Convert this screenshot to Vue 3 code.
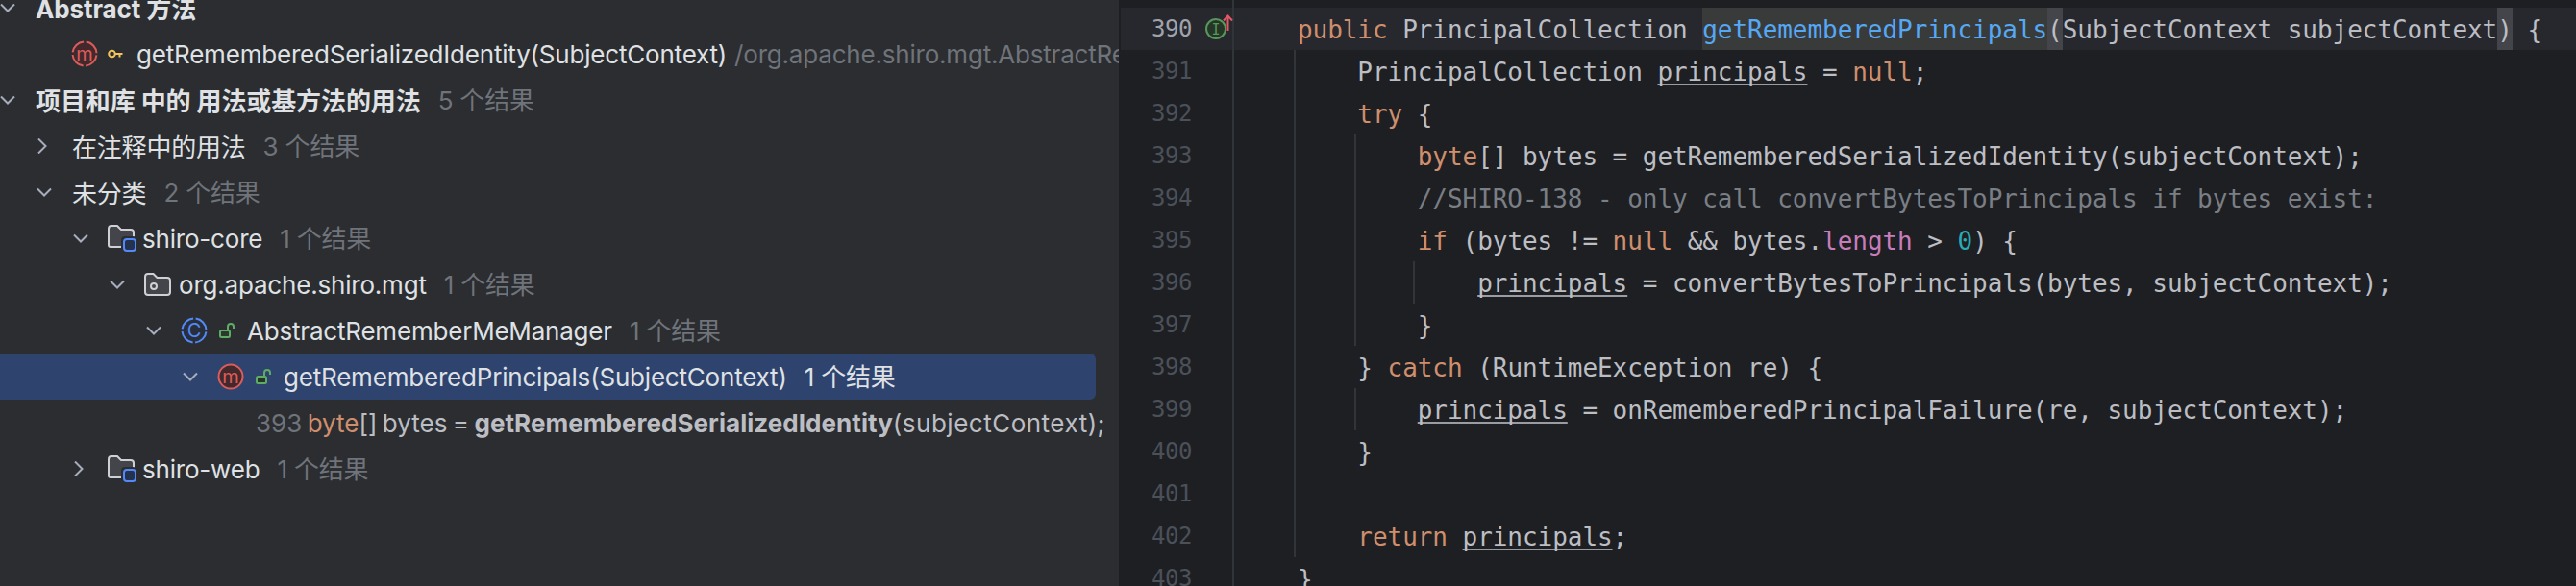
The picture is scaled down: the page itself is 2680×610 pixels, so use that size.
<script setup>
const rows = [
  { id: 'abs', chev: 'open', x: 0, textX: 37, head: true, cjk: true, name: 'Abstract 方法' },
  { id: 'sig', chev: null, x: 74, icon: 'mAbs', textX: 142, name: 'getRememberedSerializedIdentity(SubjectContext)', path: '/org.apache.shiro.mgt.AbstractRememberMeManager' },
  { id: 'proj', chev: 'open', x: 0, textX: 37, head: true, cjk: true, name: '项目和库 中的 用法或基方法的用法', count: '5 个结果' },
  { id: 'notes', chev: 'closed', x: 38, textX: 75, cjk: true, name: '在注释中的用法', count: '3 个结果' },
  { id: 'misc', chev: 'open', x: 38, textX: 75, cjk: true, name: '未分类', count: '2 个结果' },
  { id: 'core', chev: 'open', x: 76, icon: 'module', textX: 148, name: 'shiro-core', count: '1 个结果' },
  { id: 'pkg', chev: 'open', x: 114, icon: 'pkg', textX: 186, name: 'org.apache.shiro.mgt', count: '1 个结果' },
  { id: 'cls', chev: 'open', x: 152, icon: 'cls', textX: 257, name: 'AbstractRememberMeManager', count: '1 个结果' },
  { id: 'mth', chev: 'open', x: 190, icon: 'mth', textX: 295, name: 'getRememberedPrincipals(SubjectContext)', count: '1 个结果', selected: true },
  { id: 'leaf', chev: null, x: 190, textX: 266, leaf: true },
  { id: 'web', chev: 'closed', x: 76, icon: 'module', textX: 148, name: 'shiro-web', count: '1 个结果' }
]

const u = (t) => ({ t, c: 'und' })
const k = (t) => ({ t, c: 'kw' })
const p = (t) => ({ t })

const lines = [
  { n: 390, active: true, guides: [], parts: [p('    '), k('public'), p(' PrincipalCollection '), { t: 'getRememberedPrincipals', c: 'decl' }, { t: '(', c: 'brace' }, p('SubjectContext subjectContext'), { t: ')', c: 'brace' }, p(' {')] },
  { n: 391, guides: [1], parts: [p('        PrincipalCollection '), u('principals'), p(' = '), k('null'), p(';')] },
  { n: 392, guides: [1], parts: [p('        '), k('try'), p(' {')] },
  { n: 393, guides: [1, 2], parts: [p('            '), k('byte'), p('[] bytes = getRememberedSerializedIdentity(subjectContext);')] },
  { n: 394, guides: [1, 2], parts: [p('            '), { t: '//SHIRO-138 - only call convertBytesToPrincipals if bytes exist:', c: 'cm' }] },
  { n: 395, guides: [1, 2], parts: [p('            '), k('if'), p(' (bytes != '), k('null'), p(' && bytes.'), { t: 'length', c: 'fld' }, p(' > '), { t: '0', c: 'num' }, p(') {')] },
  { n: 396, guides: [1, 2, 3], parts: [p('                '), u('principals'), p(' = convertBytesToPrincipals(bytes, subjectContext);')] },
  { n: 397, guides: [1, 2], parts: [p('            }')] },
  { n: 398, guides: [1], parts: [p('        } '), k('catch'), p(' (RuntimeException re) {')] },
  { n: 399, guides: [1, 2], parts: [p('            '), u('principals'), p(' = onRememberedPrincipalFailure(re, subjectContext);')] },
  { n: 400, guides: [1], parts: [p('        }')] },
  { n: 401, guides: [1], parts: [] },
  { n: 402, guides: [1], parts: [p('        '), k('return'), p(' '), u('principals'), p(';')] },
  { n: 403, guides: [], parts: [p('    }')] }
]
</script>

<template>
  <div class="page">
    <section class="tree">
      <div v-for="r in rows" :key="r.id" class="row" :class="{ selected: r.selected }">
        <div class="lead" :style="{ width: r.textX + 'px' }">
          <div class="indent" :style="{ width: r.x + 'px' }"></div>
          <svg v-if="r.chev === 'open'" class="chev-open" viewBox="0 0 16 10"><path d="M1 1.500 8 8.500 15 1.500" /></svg>
          <svg v-else-if="r.chev === 'closed'" class="chev-closed" viewBox="0 0 16 16"><path d="M2 .5 9.500 8 2 15.500" /></svg>

          <template v-if="r.icon === 'mAbs'">
            <svg class="ico28 first" viewBox="0 0 28 28">
              <circle cx="14" cy="14" r="12.500" fill="#43292b" stroke="#db5c5c" stroke-width="2" stroke-dasharray="17 2.63" stroke-dashoffset="18.3" />
              <text x="14" y="20.500" class="glyph" fill="#db5c5c" font-size="20">m</text>
            </svg>
            <svg class="key" viewBox="0 0 16 10">
              <circle cx="4.500" cy="5" r="3.300" fill="none" stroke="#f2c55c" stroke-width="2" />
              <path d="M8 5H15.500M12.500 5V8.500" fill="none" stroke="#f2c55c" stroke-width="2" />
            </svg>
          </template>

          <svg v-else-if="r.icon === 'module'" class="folder" viewBox="0 0 30 28">
            <path d="M1 4a3 3 0 0 1 3-3h6l4 4h10a3 3 0 0 1 3 3v13a2 2 0 0 1-2 2H3a2 2 0 0 1-2-2Z" fill="#43454a" stroke="#ced0d6" stroke-width="2" />
            <rect x="14" y="12" width="16" height="16" rx="4" fill="#2b2d30" />
            <rect x="17" y="15" width="12" height="12" rx="3" fill="#25324d" stroke="#548af7" stroke-width="2" />
          </svg>

          <svg v-else-if="r.icon === 'pkg'" class="pkg" viewBox="0 0 28 24">
            <path d="M1 4a3 3 0 0 1 3-3h5.500l4 4H24a3 3 0 0 1 3 3v12a3 3 0 0 1-3 3H4a3 3 0 0 1-3-3Z" fill="#43454a" stroke="#ced0d6" stroke-width="2" />
            <circle cx="10" cy="14" r="3" fill="none" stroke="#ced0d6" stroke-width="2" />
          </svg>

          <template v-else-if="r.icon === 'cls'">
            <svg class="ico28" viewBox="0 0 28 28">
              <circle cx="14" cy="14" r="12.500" fill="#25324d" fill-opacity="0.4" stroke="#548af7" stroke-width="2" stroke-dasharray="17 2.63" stroke-dashoffset="18.3" />
              <text x="14" y="21" class="glyph" fill="#548af7" font-size="20">C</text>
            </svg>
            <svg class="lock" viewBox="0 0 17 16">
              <rect x="1" y="8" width="10" height="7" rx="1.500" fill="#2b3a2d" stroke="#5fad65" stroke-width="2" />
              <path d="M9 7V4a3 3 0 0 1 6 0V6" fill="none" stroke="#5fad65" stroke-width="2" />
            </svg>
          </template>

          <template v-else-if="r.icon === 'mth'">
            <svg class="ico28" viewBox="0 0 28 28">
              <circle cx="14" cy="14" r="12.500" fill="#43292b" stroke="#db5c5c" stroke-width="2" />
              <text x="14" y="20.500" class="glyph" fill="#db5c5c" font-size="20">m</text>
            </svg>
            <svg class="lock" viewBox="0 0 17 16">
              <rect x="1" y="8" width="10" height="7" rx="1.500" fill="#253627" stroke="#5fad65" stroke-width="2" />
              <path d="M9 7V4a3 3 0 0 1 6 0V6" fill="none" stroke="#5fad65" stroke-width="2" />
            </svg>
          </template>
        </div>

        <span v-if="r.leaf" class="leaf"><span class="gray">393 </span><span class="kw">byte</span>[] bytes = <b>getRememberedSerializedIdentity</b><span class="args">(subjectContext);</span></span>
        <template v-else>
          <span class="name" :class="{ head: r.head, cjk: r.cjk }">{{ r.name }}</span>
          <span v-if="r.count" class="count">{{ r.count }}</span>
          <span v-if="r.path" class="path">{{ r.path }}</span>
        </template>
      </div>
    </section>

    <section class="editor">
      <div class="topgap"></div>
      <div v-for="l in lines" :key="l.n" class="line" :class="{ active: l.active }">
        <div class="gutter">
          <span class="num-cell">{{ l.n }}</span>
          <svg v-if="l.active" class="impl" viewBox="0 0 36 28">
            <circle cx="14" cy="15" r="10" fill="#253627" stroke="#57965c" stroke-width="2" />
            <text x="14" y="20.500" class="glyph-mono" fill="#57965c" font-size="15">I</text>
            <path d="M26.500 17V2M22 6.500 26.500 1.500 31 6.500" fill="none" stroke="#e55765" stroke-width="2" />
          </svg>
        </div>
        <div class="code">
          <i v-for="g in l.guides" :key="g" class="guide" :class="'g' + g"></i>
          <span v-for="(s, i) in l.parts" :key="i" :class="s.c">{{ s.t }}</span>
        </div>
      </div>
    </section>
  </div>
</template>

<style>
html, body { margin: 0; background: #1e1f22; overflow: hidden; }
</style>

<style scoped>
.page {
  display: flex;
  width: 2680px;
  height: 610px;
  overflow: hidden;
}

/* tree panel */
.tree {
  width: 1164px;
  flex: none;
  height: 610px;
  overflow: hidden;
  background: #2b2d30;
  font-family: Inter, "Noto Sans CJK SC", sans-serif;
  font-size: 26px;
  letter-spacing: -0.2px;
  color: #dfe1e5;
}
.row {
  display: flex;
  align-items: center;
  height: 48px;
  white-space: nowrap;
  width: 1164px;
}
.row:first-child { margin-top: -16px; }
.row.selected {
  width: 1140px;
  background: #2e436e;
  border-radius: 0 6px 6px 0;
}
.lead {
  display: flex;
  align-items: center;
  flex: none;
  height: 48px;
}
.indent { flex: none; }
.chev-open, .chev-closed {
  flex: none;
  fill: none;
  stroke: #a8adbd;
  stroke-width: 2;
}
.chev-open { width: 16px; height: 10px; }
.chev-closed { width: 16px; height: 16px; }
.ico28 { width: 28px; height: 28px; flex: none; margin-left: 20px; }
.ico28.first { margin-left: 0; }
.key { width: 16px; height: 10px; flex: none; margin-left: 10px; }
.lock { width: 17px; height: 16px; flex: none; margin-left: 12px; }
.folder { width: 30px; height: 28px; flex: none; margin-left: 20px; }
.pkg { width: 28px; height: 24px; flex: none; margin-left: 20px; }
.glyph {
  font-family: Inter, sans-serif;
  letter-spacing: 0;
  text-anchor: middle;
}
.glyph-mono {
  font-family: "DejaVu Sans Mono", monospace;
  letter-spacing: 0;
  text-anchor: middle;
}
.name.head { font-weight: 700; letter-spacing: -0.1px; }
.name.cjk { margin-bottom: 2px; }
.count { margin-left: 18px; margin-bottom: 3px; color: #6f737a; }
.selected .count { color: #dfe1e5; }
.path { margin-left: 8px; color: #6f737a; }
.gray { color: #6f737a; }
.leaf { color: #bcbec4; letter-spacing: 0; word-spacing: -1.900px; }
.leaf b { font-weight: 700; letter-spacing: 0.05px; }
.leaf .kw { color: #cf8e6d; }
.args { letter-spacing: 0.5px; }

/* editor */
.editor {
  flex: 1;
  min-width: 0;
  padding-left: 2px;
  background: #1e1f22;
  overflow: hidden;
  font-family: "DejaVu Sans Mono", "Liberation Mono", monospace;
  color: #bcbec4;
}
.topgap {
  width: 118px;
  height: 8px;
  box-sizing: border-box;
  border-right: 2px solid #313438;
}
.line {
  display: flex;
  height: 44px;
  line-height: 44px;
}
.line.active { background: #26282e; }
.gutter {
  position: relative;
  width: 118px;
  flex: none;
  border-right: 2px solid #313438;
  box-sizing: border-box;
  font-size: 24px;
  color: #4b5059;
}
.num-cell { display: block; margin-left: 32px; letter-spacing: -0.4px; }
.active .num-cell { color: #a1a3ab; }
.impl {
  position: absolute;
  left: 84.500px;
  top: 7px;
  width: 36px;
  height: 28px;
}
.code {
  position: relative;
  flex: 1;
  padding-left: 3.500px;
  font-size: 26px;
  line-height: 46px;
  letter-spacing: -0.05px;
  white-space: pre;
}
.guide {
  position: absolute;
  top: 0;
  bottom: 0;
  width: 2px;
  background: #313438;
}
.g1 { left: 62px; }
.g2 { left: 125px; }
.g3 { left: 186px; }
.kw { color: #cf8e6d; }
.cm { color: #7a7e85; }
.num { color: #2aacb8; }
.fld { color: #c77dbb; }
.decl { color: #56a8f5; background: #393b3a; display: inline-block; height: 44px; }
.brace { background: #43454a; display: inline-block; height: 44px; }
.und {
  text-decoration: underline;
  text-decoration-color: #9a9ca3;
  text-decoration-skip-ink: none;
  text-underline-offset: 3px;
  text-decoration-thickness: 2px;
}
</style>
